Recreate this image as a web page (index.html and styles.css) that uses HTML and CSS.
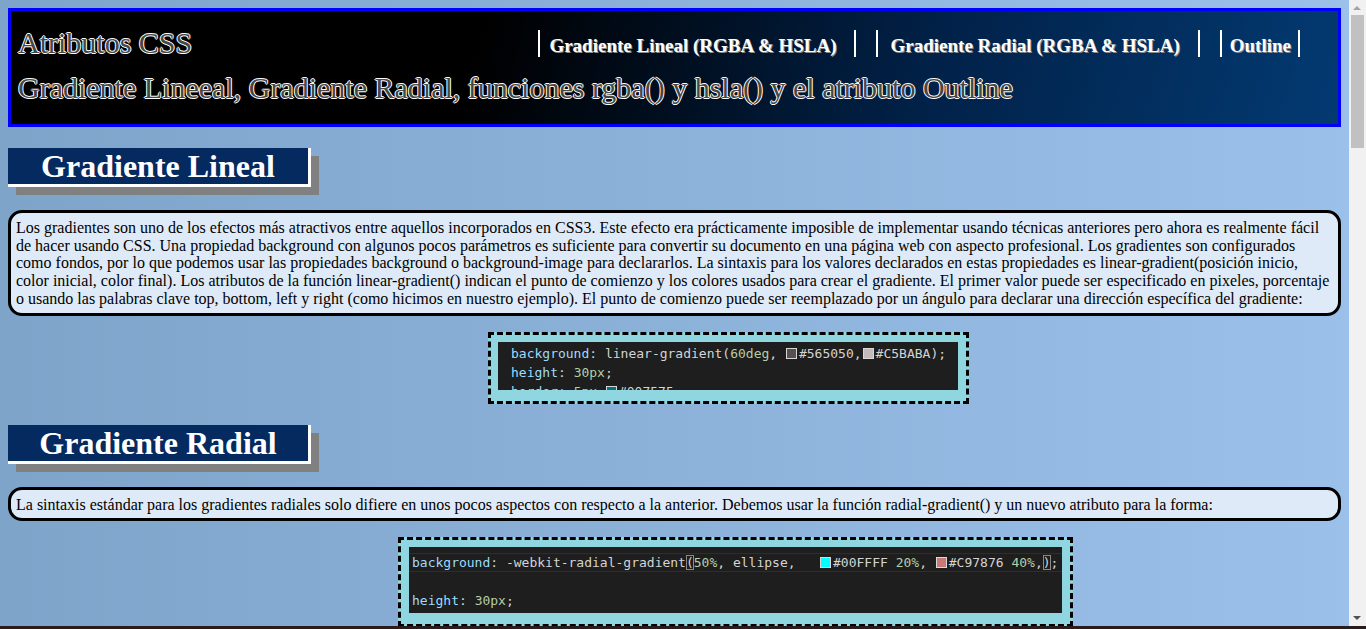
FILE: index.html
```html
<!DOCTYPE html>
<html lang="es">
<head>
<meta charset="utf-8">
<title>Atributos CSS</title>
<link rel="stylesheet" href="styles.css">
</head>
<body>
<header class="site-header">
  <div class="header-top">
    <h1 class="site-title">Atributos CSS</h1>
    <nav class="site-nav">
      <a class="nav-link nav-link--a" href="#lineal">Gradiente Lineal (RGBA &amp; HSLA)</a>
      <a class="nav-link nav-link--b" href="#radial">Gradiente Radial (RGBA &amp; HSLA)</a>
      <a class="nav-link nav-link--c" href="#outline">Outline</a>
    </nav>
  </div>
  <p class="site-subtitle">Gradiente Lineeal, Gradiente Radial, funciones rgba() y hsla() y el atributo Outline</p>
</header>

<main class="content">
  <section id="lineal" class="topic">
    <h2 class="section-title">Gradiente Lineal</h2>
    <p class="text-box">Los gradientes son uno de los efectos más atractivos entre aquellos incorporados en CSS3. Este efecto era prácticamente imposible de implementar usando técnicas anteriores pero ahora es realmente fácil de hacer usando CSS. Una propiedad background con algunos pocos parámetros es suficiente para convertir su documento en una página web con aspecto profesional. Los gradientes son configurados como fondos, por lo que podemos usar las propiedades background o background-image para declararlos. La sintaxis para los valores declarados en estas propiedades es linear-gradient(posición inicio, color inicial, color final). Los atributos de la función linear-gradient() indican el punto de comienzo y los colores usados para crear el gradiente. El primer valor puede ser especificado en pixeles, porcentaje o usando las palabras clave top, bottom, left y right (como hicimos en nuestro ejemplo). El punto de comienzo puede ser reemplazado por un ángulo para declarar una dirección específica del gradiente:</p>
    <div class="code-shot code-shot--lineal">
      <div class="code-view code-view--lineal">
        <div class="code-line"><span class="prop">background</span>: linear-gradient(<span class="num">60deg</span>, <span class="sw sw-565050"></span>#565050,<span class="sw sw-c5baba"></span>#C5BABA);</div>
        <div class="code-line"><span class="prop">height</span>: <span class="num">30px</span>;</div>
        <div class="code-line"><span class="prop">border</span>: <span class="num">5px</span> <span class="sw sw-007575"></span>#007575;</div>
      </div>
    </div>
  </section>

  <section id="radial" class="topic">
    <h2 class="section-title">Gradiente Radial</h2>
    <p class="text-box">La sintaxis estándar para los gradientes radiales solo difiere en unos pocos aspectos con respecto a la anterior. Debemos usar la función radial-gradient() y un nuevo atributo para la forma:</p>
    <div class="code-shot code-shot--radial">
      <div class="code-view code-view--radial">
        <div class="code-line code-line--current"><span class="prop">background</span>: -webkit-radial-gradient<span class="bracket">(</span><span class="num">50%</span>, ellipse,&nbsp;&nbsp; <span class="sw sw-00ffff"></span>#00FFFF <span class="num">20%</span>, <span class="sw sw-c97876"></span>#C97876 <span class="num">40%</span>,<span class="bracket">)</span>;</div>
        <div class="code-line">&nbsp;</div>
        <div class="code-line"><span class="prop">height</span>: <span class="num">30px</span>;</div>
        <div class="code-line"><span class="prop">border</span>: <span class="sw sw-white"></span>#FFFFFF;</div>
      </div>
    </div>
  </section>

  <section id="rgba" class="topic">
    <h2 class="section-title">RGBA y HSLA</h2>
    <p class="text-box">Las funciones rgba() y hsla() permiten declarar colores con un valor de transparencia. El último parámetro indica la opacidad del color, desde 0 (completamente transparente) hasta 1 (completamente opaco).</p>
    <div class="code-shot code-shot--lineal">
      <div class="code-view code-view--lineal">
        <div class="code-line"><span class="prop">color</span>: rgba(<span class="num">255</span>, <span class="num">0</span>, <span class="num">0</span>, <span class="num">0.5</span>);</div>
        <div class="code-line"><span class="prop">color</span>: hsla(<span class="num">120</span>, <span class="num">100%</span>, <span class="num">50%</span>, <span class="num">0.5</span>);</div>
      </div>
    </div>
  </section>

  <section id="outline" class="topic">
    <h2 class="section-title">Outline</h2>
    <p class="text-box">La propiedad outline dibuja una segunda línea alrededor del elemento, fuera del borde, sin afectar a las dimensiones de la caja.</p>
    <div class="code-shot code-shot--lineal">
      <div class="code-view code-view--lineal">
        <div class="code-line"><span class="prop">outline</span>: <span class="num">2px</span> dashed <span class="sw sw-000000"></span>#000000;</div>
        <div class="code-line"><span class="prop">outline-offset</span>: <span class="num">15px</span>;</div>
      </div>
    </div>
  </section>
</main>

<div class="fake-scrollbar" aria-hidden="true">
  <span class="fake-scrollbar__arrow fake-scrollbar__arrow--up"></span>
  <span class="fake-scrollbar__thumb"></span>
  <span class="fake-scrollbar__arrow fake-scrollbar__arrow--down"></span>
</div>
<div class="screen-edge"></div>
</body>
</html>
```

FILE: styles.css
```css
html {
  background: linear-gradient(to right, #7ea4ca, #9bc0ea);
  min-height: 100%;
}

body {
  margin: 8px 25px 8px 8px;
  font-family: "Liberation Serif", "Times New Roman", serif;
  color: #000;
}

.site-header {
  border: 3px solid #0000ff;
  background: linear-gradient(105deg, #000000 35%, #01224a 70%, #033a72 100%);
  padding: 15px 0 15px 7px;
  height: 119px;
  box-sizing: border-box;
}

.header-top {
  display: flex;
  align-items: center;
  justify-content: space-between;
}

.site-title,
.site-subtitle {
  margin: 0;
  font-weight: normal;
  font-size: 30px;
  line-height: 34px;
  color: #474747;
  text-shadow: -1px 0 0 #fff, 1px 0 0 #fff, 0 -1px 0 #fff, 0 1px 0 #fff;
}

.site-subtitle {
  margin-top: 11px;
}

.site-nav {
  display: flex;
  gap: 20px;
  margin-right: 38px;
}

.nav-link {
  display: block;
  color: #fff;
  text-decoration: none;
  font-weight: bold;
  font-size: 19px;
  line-height: 21px;
  padding-top: 5px;
  padding-bottom: 1px;
  border-left: 2px solid #fff;
  border-right: 2px solid #fff;
  text-shadow: 1px 1px 0 #8a8a8a;
}

.nav-link--a { padding-left: 9px; padding-right: 17px; }
.nav-link--b { padding-left: 13px; padding-right: 18px; }
.nav-link--c { padding-left: 8px; padding-right: 7px; }

.content {
  padding-bottom: 1500px;
}

.topic {
  display: flex;
  flex-direction: column;
  align-items: flex-start;
}

.section-title {
  margin: 21px 0 0;
  width: 300px;
  background: #042a5f;
  color: #fff;
  font-size: 32px;
  font-weight: bold;
  line-height: 36px;
  text-align: center;
  border-right: 3px solid #fff;
  border-bottom: 3px solid #fff;
  box-shadow: 8px 8px 0 #808080;
}

.text-box {
  align-self: stretch;
  margin: 23px 0 0;
  padding: 6px 8px 5px 5px;
  background: #deeaf8;
  border: 3px solid #000;
  border-radius: 14px;
  font-size: 16px;
  line-height: 17.7px;
}

.code-shot {
  margin-top: 16px;
  border: 3px dashed #000;
  background: #8fd6e1;
}

.code-shot--lineal {
  margin-left: 480px;
  padding: 7px 8px 11px 7px;
}

.code-shot--radial {
  margin-left: 390px;
  padding: 7px 8px 11px 8px;
}

.code-view {
  background: #1e1e1e;
  overflow: hidden;
  box-sizing: border-box;
  font-family: "DejaVu Sans Mono", "Liberation Mono", monospace;
  font-size: 13px;
  line-height: 19px;
  color: #d4d4d4;
}

.code-view--lineal {
  width: 460px;
  height: 48px;
  padding: 2px 0 0 13px;
}

.code-view--radial {
  width: 653px;
  height: 66px;
  padding: 6px 0 0 0;
}

.code-view--radial .code-line {
  padding-left: 3px;
}

.code-line {
  height: 19px;
  white-space: nowrap;
  box-sizing: border-box;
}

.code-line--current {
  border-top: 1px solid #2e2e2e;
  border-bottom: 1px solid #2e2e2e;
  line-height: 17px;
}

.prop { color: #9cdcfe; }
.num { color: #b5cea8; }

.bracket {
  outline: 1px solid #8a8a8a;
  outline-offset: -1px;
}

.sw {
  display: inline-block;
  width: 9px;
  height: 9px;
  border: 1px solid #d8d8d8;
  margin: 0 2px 0 1px;
  vertical-align: -1px;
}

.sw-565050 { background: #565050; }
.sw-c5baba { background: #c5baba; }
.sw-007575 { background: #007575; }
.sw-00ffff { background: #00ffff; }
.sw-c97876 { background: #c97876; }
.sw-white { background: #ffffff; }
.sw-000000 { background: #000000; }

.fake-scrollbar {
  position: fixed;
  top: 0;
  right: 0;
  bottom: 0;
  width: 17px;
  background: #f1f1f1;
}

.fake-scrollbar__thumb {
  position: absolute;
  left: 2px;
  right: 2px;
  top: 15px;
  height: 133px;
  background: #c1c1c1;
}

.fake-scrollbar__arrow {
  position: absolute;
  left: 4px;
  width: 0;
  height: 0;
  border-left: 4px solid transparent;
  border-right: 4px solid transparent;
}

.fake-scrollbar__arrow--up {
  top: 6px;
  border-bottom: 4px solid #a3a3a3;
}

.fake-scrollbar__arrow--down {
  bottom: 9px;
  border-top: 4px solid #505050;
}

.screen-edge {
  position: fixed;
  left: 0;
  right: 0;
  bottom: 0;
  height: 3px;
  background: #2a1c1c;
}
```
